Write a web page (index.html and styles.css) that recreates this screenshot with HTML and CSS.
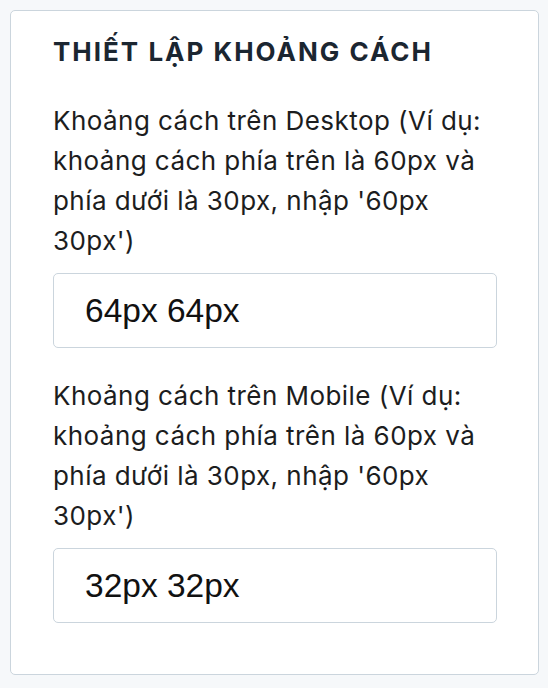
FILE: index.html
```html
<!DOCTYPE html>
<html lang="vi">
<head>
<meta charset="utf-8">
<title>Thiết lập khoảng cách</title>
<link rel="stylesheet" href="styles.css">
</head>
<body>
<section class="card">
  <h2 class="card-title">THIẾT LẬP KHOẢNG CÁCH</h2>
  <div class="field field-first">
    <label class="field-label" for="desk">Khoảng cách trên Desktop (Ví dụ: khoảng cách phía trên là 60px và phía dưới là 30px, nhập '60px 30px')</label>
    <input class="field-input" id="desk" type="text" value="64px 64px">
  </div>
  <div class="field">
    <label class="field-label" for="mob">Khoảng cách trên Mobile (Ví dụ: khoảng cách phía trên là 60px và phía dưới là 30px, nhập '60px 30px')</label>
    <input class="field-input" id="mob" type="text" value="32px 32px">
  </div>
</section>
</body>
</html>
```
FILE: styles.css
```css
* { box-sizing: border-box; }
html, body { margin: 0; padding: 0; }
body {
  background: #f6f8fa;
  padding: 10px 9px 14px 10px;
  font-family: Inter, "Noto Sans", sans-serif;
}
.card {
  background: #ffffff;
  border: 1px solid #cbd5dd;
  border-radius: 5px;
  padding: 25px 41px 51px 42px;
  display: flex;
  flex-direction: column;
}
.card-title {
  margin: 0;
  font-size: 26px;
  line-height: 32px;
  font-weight: 700;
  letter-spacing: 2px;
  color: #1b2631;
}
.field {
  display: flex;
  flex-direction: column;
  gap: 12px;
  margin-top: 28px;
}
.field-first { margin-top: 33px; }
.field-label {
  font-size: 26px;
  line-height: 40px;
  letter-spacing: 0.45px;
  color: #1c1d1e;
}
.field-input {
  height: 75px;
  width: 100%;
  border: 1px solid #cbd5dd;
  border-radius: 5px;
  padding: 0 31px;
  font-family: "Liberation Sans", Arial, sans-serif;
  font-size: 33.5px;
  color: #111111;
  background: #ffffff;
  outline: none;
}
```
